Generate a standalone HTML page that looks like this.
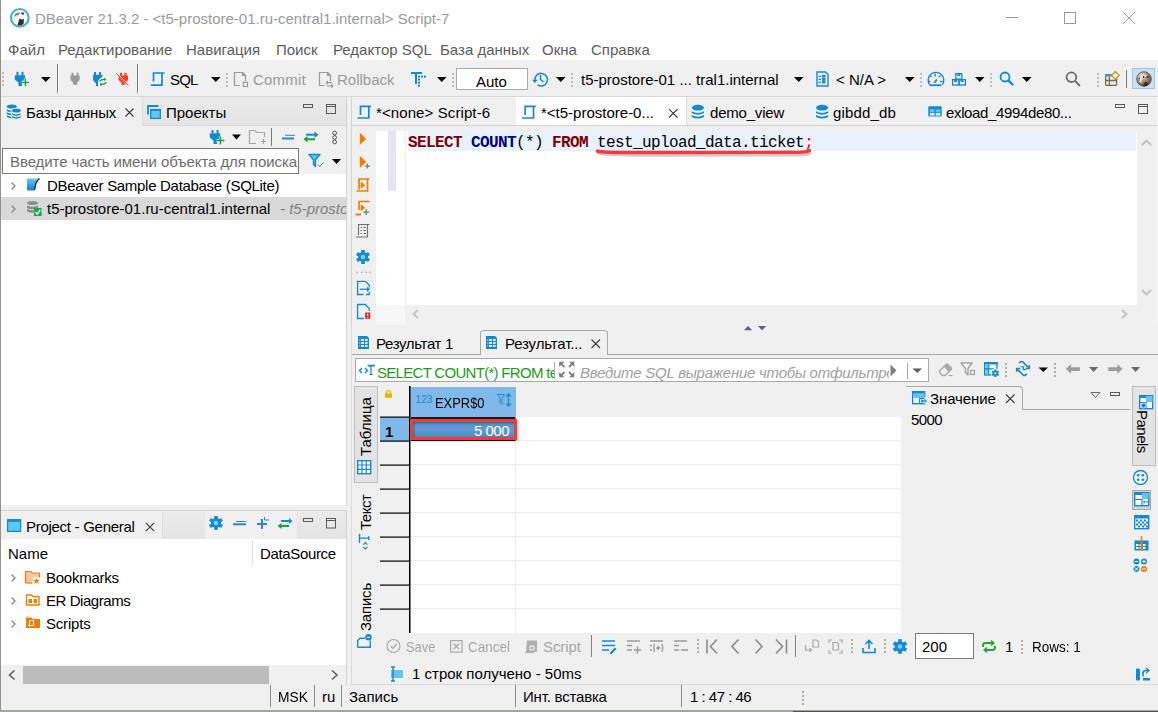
<!DOCTYPE html>
<html><head><meta charset="utf-8">
<style>
html,body{margin:0;padding:0}
body{width:1158px;height:712px;position:relative;overflow:hidden;background:#f0f0f0;font-family:"Liberation Sans",sans-serif;font-size:15px;color:#000}
.a{position:absolute}
.t{position:absolute;white-space:nowrap;line-height:17px}
.b{position:absolute;box-sizing:border-box}
svg{position:absolute;overflow:visible}
.m{font-family:"Liberation Mono",monospace}
</style></head><body>

<!-- title bar -->
<div class="b" style="left:0;top:0;width:1158px;height:60px;background:#fff"></div>
<div class="t" style="left:35px;top:10px;color:#9a9a9a">DBeaver 21.3.2 - &lt;t5-prostore-01.ru-central1.internal&gt; Script-7</div>

<!-- menu -->
<div class="t" style="left:8px;top:41px;color:#5c5c5c">Файл</div>
<div class="t" style="left:58px;top:41px;color:#5c5c5c">Редактирование</div>
<div class="t" style="left:186px;top:41px;color:#5c5c5c">Навигация</div>
<div class="t" style="left:276px;top:41px;color:#5c5c5c">Поиск</div>
<div class="t" style="left:333px;top:41px;color:#5c5c5c">Редактор SQL</div>
<div class="t" style="left:440px;top:41px;color:#5c5c5c">База данных</div>
<div class="t" style="left:542px;top:41px;color:#5c5c5c">Окна</div>
<div class="t" style="left:591px;top:41px;color:#5c5c5c">Справка</div>

<!-- toolbar -->
<div class="b" style="left:0;top:60px;width:1158px;height:36px;background:#f0f0f0"></div>


<!-- title icon + window controls -->
<svg style="left:0;top:0" width="40" height="36"><circle cx="19.8" cy="17.8" r="8.8" fill="#fff" stroke="#45b5bf" stroke-width="2.2"/><path d="M14.5,14.5 Q17,12 20,12.5 L19,15 Q16,15 14.5,17Z" fill="#8a8080"/><path d="M20.5,13 Q23,11.5 24.5,13 L23,15.5Z" fill="#5a4a48"/><path d="M17.5,25 L19.5,18.5 Q22,20 24,19 L23.5,24 Q20,26.5 17.5,25Z" fill="#3a2a28"/><path d="M13.5,16 L15,21 L14,19Z" fill="#6a5a58"/></svg>
<svg style="left:1000px;top:0" width="158" height="36" stroke="#999" stroke-width="1" fill="none"><path d="M6,17.5H18"/><rect x="64.5" y="12.5" width="11" height="11"/><path d="M123,12L135,24M135,12L123,24"/></svg>

<!-- toolbar grips & separators -->
<svg style="left:0;top:60px" width="1158" height="36">
<g fill="#c4bcae"><rect x="2" y="12" width="2" height="2"/><rect x="2" y="16" width="2" height="2"/><rect x="2" y="20" width="2" height="2"/><rect x="2" y="24" width="2" height="2"/></g>
<g fill="#c4bcae" id="grips">
<rect x="226" y="13" width="2" height="2"/><rect x="226" y="17" width="2" height="2"/><rect x="226" y="21" width="2" height="2"/><rect x="226" y="25" width="2" height="2"/>
<rect x="452" y="13" width="2" height="2"/><rect x="452" y="17" width="2" height="2"/><rect x="452" y="21" width="2" height="2"/><rect x="452" y="25" width="2" height="2"/>
<rect x="571" y="13" width="2" height="2"/><rect x="571" y="17" width="2" height="2"/><rect x="571" y="21" width="2" height="2"/><rect x="571" y="25" width="2" height="2"/>
<rect x="920" y="13" width="2" height="2"/><rect x="920" y="17" width="2" height="2"/><rect x="920" y="21" width="2" height="2"/><rect x="920" y="25" width="2" height="2"/>
<rect x="990" y="13" width="2" height="2"/><rect x="990" y="17" width="2" height="2"/><rect x="990" y="21" width="2" height="2"/><rect x="990" y="25" width="2" height="2"/>
<rect x="1097" y="13" width="2" height="2"/><rect x="1097" y="17" width="2" height="2"/><rect x="1097" y="21" width="2" height="2"/><rect x="1097" y="25" width="2" height="2"/>
</g>
<g fill="#7a7a7a"><rect x="57" y="4" width="1" height="29"/><rect x="137" y="4" width="1" height="29"/><rect x="1126" y="10" width="1" height="18"/></g>
<g fill="#fff"><rect x="58" y="4" width="1" height="29"/><rect x="138" y="4" width="1" height="29"/></g>
<g fill="#000"><path d="M41,17H50.5L45.75,22Z"/><path d="M211,17H220.5L215.75,22Z"/><path d="M437,17H446.5L441.75,22Z"/><path d="M556,17H565.5L560.75,22Z"/><path d="M794,17H803.5L798.75,22Z"/><path d="M905,17H914.5L909.75,22Z"/><path d="M975,17H984.5L979.75,22Z"/><path d="M1022,17H1031.5L1026.75,22Z"/></g>
</svg>

<!-- plug + -->
<svg style="left:14px;top:71px" width="20" height="18"><g fill="#118ad3"><rect x="2.5" y="0.8" width="2" height="4"/><rect x="7.5" y="0.8" width="2" height="4"/><path d="M0.8,4.2H11.2V8.5L8,11.8V15H4.5V11.8L0.8,8.5Z"/></g><path d="M11.4,7.8V15M7.8,11.4H15" stroke="#fff" stroke-width="3.2"/><path d="M11.4,7.8V15M7.8,11.4H15" stroke="#13a538" stroke-width="1.5"/></svg>
<!-- gray plug -->
<svg style="left:70px;top:72px" width="12" height="14"><g fill="#9a9a9a"><rect x="1.5" y="0.8" width="2" height="3.5"/><rect x="6.5" y="0.8" width="2" height="3.5"/><path d="M0.5,3.5H9.7V8L7.2,10.5V12.8H3V10.5L0.5,8Z"/></g></svg>
<!-- blue plug refresh -->
<svg style="left:88px;top:68px" width="24" height="22"><g fill="#118ad3"><rect x="6" y="4" width="2" height="3.2"/><rect x="11" y="4" width="2" height="3.2"/><path d="M5.1,6.8H14.5Q15,8.5 13.5,9.5Q11,10.5 10,13V18H8V15.5L5.1,12.2Z"/></g>
<g fill="none" stroke="#13a538" stroke-width="1.3"><path d="M11.4,13.4Q13,11.2 17.2,11.4"/><path d="M18.5,14.4Q17,16.4 12.6,16.4"/></g><path d="M16.3,9.5L18.3,11.4L16.3,13.3Z" fill="#13a538"/><path d="M13.5,14.5L11.5,16.4L13.5,18.3Z" fill="#13a538"/></svg>
<!-- red plug -->
<svg style="left:116px;top:72px" width="14" height="14"><g fill="#ff3a1a"><rect x="4" y="0.8" width="2" height="3.5"/><rect x="8.5" y="0.8" width="2" height="3.5"/><path d="M2.5,3.5H12V8L9.5,10.5V12.8H5.5V10.5L2.5,8Z"/></g><path d="M1,1.5L12,13" stroke="#f0f0f0" stroke-width="1.5"/><path d="M0.3,1.3L12.5,13.5" stroke="#ff3a1a" stroke-width="0.9"/></svg>
<!-- SQL script icon -->
<svg style="left:150px;top:71px" width="18" height="16" fill="none" stroke="#118ad3" stroke-width="1.7"><path d="M3.5,10.5V2H14.5"/><path d="M12,2V14.2H1"/></svg>
<div class="t" style="left:170px;top:71px;letter-spacing:-0.8px">SQL</div>
<div class="t" style="left:253px;top:71px;color:#9a9a9a;letter-spacing:0.2px">Commit</div>
<div class="t" style="left:337px;top:71px;color:#9a9a9a">Rollback</div>
<!-- commit -->
<svg style="left:233px;top:71px" width="18" height="18" fill="none" stroke="#9a9a9a" stroke-width="1.2"><path d="M6.5,14.5H1.5V1.5H9.8L12.5,4.2V10"/><path d="M9.5,1.5V4.5H12.5" fill="#9a9a9a"/><rect x="10.3" y="11.3" width="4.2" height="4.2"/></svg>
<!-- rollback -->
<svg style="left:318px;top:71px" width="18" height="18" fill="none" stroke="#9a9a9a" stroke-width="1.2"><path d="M6.5,14.5H1.5V1.5H9.8L12.5,4.2V10"/><path d="M9.5,1.5V4.5H12.5" fill="#9a9a9a"/><path d="M8,11.6H14M8,11.6L9.8,10M8,11.6L9.8,13.2"/><path d="M9,15H15M15,15L13.2,13.4M15,15L13.2,16.6"/></svg>
<!-- T format -->
<svg style="left:410px;top:71px" width="18" height="16" fill="#118ad3"><rect x="1" y="1" width="11" height="2"/><rect x="5" y="1" width="2" height="12"/><rect x="8" y="4.6" width="2" height="2"/><rect x="11" y="4.6" width="2" height="2"/><rect x="14" y="4.6" width="2" height="2"/><rect x="8" y="7.6" width="2" height="2"/><rect x="8" y="10.6" width="2" height="2"/><rect x="8" y="13.6" width="2" height="2"/></svg>
<!-- Auto box -->
<div class="b" style="left:456px;top:68px;width:72px;height:22px;background:#fff;border:1px solid #a9a9a9"></div>
<div class="t" style="left:476px;top:73px">Auto</div>
<!-- history -->
<svg style="left:531px;top:70px" width="20" height="18" fill="none" stroke="#118ad3" stroke-width="1.5"><path d="M4,11A6.3,6.3 0 1 1 6.5,14.8"/><path d="M9.5,5V9.5L12.5,12"/><path d="M1,9.8H6.8L3.9,13Z" fill="#118ad3" stroke="none"/></svg>
<div class="t" style="left:581px;top:71px">t5-prostore-01 ... tral1.internal</div>
<!-- doc icon -->
<svg style="left:816px;top:71px" width="14" height="16" fill="none" stroke="#118ad3" stroke-width="1.4"><path d="M1,1H9.5L12,3.5V15H1Z"/><g stroke-width="1.3"><path d="M2.5,5.3H5M2.5,8.3H5M2.5,11.3H5"/></g><g fill="#118ad3" stroke="none"><rect x="6" y="3.8" width="3.5" height="2.6"/><rect x="6" y="6.8" width="3.5" height="3"/><rect x="6" y="10" width="3.5" height="2.4"/></g></svg>
<div class="t" style="left:836px;top:71px">&lt; N/A &gt;</div>
<!-- dashboard -->
<svg style="left:922px;top:66px" width="48" height="26">
<g fill="none" stroke="#1a86d0" stroke-width="1.4"><path d="M7.5,18.5A7.8,7.8 0 1 1 20.5,18.5"/><path d="M13.2,7.5V10.5M8,9.5L9.5,11M18.5,9.5L17,11M6,15.5H8.5M18,15.5H20.5"/></g>
<path d="M7.5,19.2H19.5" stroke="#1a86d0" stroke-width="1.8"/>
<path d="M11.8,16.3L14.3,13.2L15.2,14L13,16.8Z" fill="#1a86d0" stroke="#1a86d0" stroke-width="0.8"/>
<g fill="none" stroke="#1a86d0" stroke-width="1.3"><rect x="33.8" y="7.6" width="6" height="5.6"/><rect x="30.6" y="13.6" width="6.4" height="5.4"/><rect x="37" y="13.6" width="6.4" height="5.4"/><path d="M36,7.6V9.3H37.6V7.6M32.8,13.6V15.3H34.4V13.6M39.2,13.6V15.3H40.8V13.6"/></g>
</svg>
<!-- blue search -->
<svg style="left:999px;top:71px" width="16" height="16" fill="none" stroke="#118ad3"><circle cx="6" cy="6" r="4.5" stroke-width="1.8"/><path d="M9.5,9.5L13.5,13.5" stroke-width="2.4" stroke-linecap="round"/></svg>
<!-- gray search -->
<svg style="left:1065px;top:71px" width="18" height="18" fill="none" stroke="#6e6e6e"><circle cx="6.4" cy="6.2" r="4.8" stroke-width="1.8"/><path d="M10,9.8L15,15" stroke-width="2"/></svg>
<!-- table new -->
<svg style="left:1100px;top:68px" width="24" height="22"><rect x="5.6" y="6.6" width="11" height="10.8" rx="1" fill="#e2f2fc" stroke="#7a6a40" stroke-width="1.3"/><rect x="5" y="6" width="12.2" height="2.6" rx="0.8" fill="#4a8ad0"/><path d="M9.4,8.6V17.3M5.6,12.5H16.6" stroke="#7a6a40" stroke-width="1.3"/><path d="M15.4,3.6L19.2,7.4L15.4,11.2L11.6,7.4Z" fill="#fff6d0" stroke="#c89a20" stroke-width="1.4"/><path d="M15.4,5.2V9.6M13.2,7.4H17.6" stroke="#fff" stroke-width="1"/></svg>
<!-- beaver button -->
<div class="b" style="left:1132px;top:68px;width:23px;height:21px;background:#c9e0f5;border:1px solid #90c8f4"></div>
<svg style="left:1130px;top:66px" width="28" height="26"><defs><radialGradient id="bv" cx="0.35" cy="0.3" r="0.8"><stop offset="0" stop-color="#f4ece4"/><stop offset="0.45" stop-color="#a89080"/><stop offset="1" stop-color="#5a4436"/></radialGradient></defs><circle cx="14" cy="13" r="7.3" fill="url(#bv)" stroke="#4a3a30" stroke-width="0.7"/><path d="M9.5,16Q10,11 13.5,9.5L17.5,9.3Q15,10.5 12,12.5Q11,14.5 11.5,17Z" fill="#fff" opacity="0.85"/><circle cx="13.6" cy="11" r="0.9" fill="#222"/><circle cx="17.6" cy="11" r="1" fill="#222"/><path d="M13,20Q14,15.5 16.5,16Q18.5,17 17.5,19.5Q15.5,20.8 13,20Z" fill="#3a2a22"/><path d="M8.5,12.5L9.8,11.5L9.5,13.5Z" fill="#222"/></svg>
<!-- left DB panel -->
<div class="b" style="left:1px;top:96px;width:346px;height:410px;background:#f0f0f0;border-right:1px solid #d4d4d4"></div>
<div class="b" style="left:142px;top:96px;width:204px;height:30px;background:linear-gradient(#ebebeb,#e4e4e4);border-bottom:1px solid #d8d8d8;border-left:1px solid #dcdcdc"></div>
<div class="b" style="left:1px;top:174px;width:345px;height:331px;background:#fff"></div>
<div class="b" style="left:1px;top:197px;width:345px;height:23px;background:#d9d9d9"></div>
<div class="t" style="left:26px;top:104px;letter-spacing:-0.15px">Базы данных</div>
<div class="t" style="left:166px;top:104px">Проекты</div>
<div class="b" style="left:2px;top:148px;width:297px;height:26px;background:#fff;border:1px solid #7a7a7a"></div>
<div class="t" style="left:10px;top:153px;color:#6d6d6d;letter-spacing:-0.08px">Введите часть имени объекта для поиска</div>
<div class="t" style="left:47px;top:177px;letter-spacing:-0.3px">DBeaver Sample Database (SQLite)</div>
<div class="t" style="left:47px;top:200px">t5-prostore-01.ru-central1.internal</div>
<div class="t" style="left:280px;top:200px;color:#808080;font-style:italic;width:66px;overflow:hidden">- t5-prostore</div>

<!-- project panel -->
<div class="b" style="left:1px;top:510px;width:346px;height:176px;background:#f0f0f0;border-right:1px solid #d4d4d4;border-top:1px solid #d4d4d4"></div>
<div class="b" style="left:162px;top:511px;width:184px;height:29px;background:linear-gradient(#ebebeb,#e4e4e4);border-bottom:1px solid #d8d8d8;border-left:1px solid #dcdcdc"></div>
<div class="b" style="left:205px;top:511px;width:92px;height:28px;background:#f0f0f0"></div>
<div class="b" style="left:1px;top:539px;width:345px;height:126px;background:#fff"></div>
<div class="t" style="left:26px;top:518px;letter-spacing:-0.28px">Project - General</div>
<div class="t" style="left:8px;top:545px">Name</div>
<div class="t" style="left:260px;top:545px;letter-spacing:-0.35px">DataSource</div>
<div class="t" style="left:46px;top:569px;letter-spacing:-0.25px">Bookmarks</div>
<div class="t" style="left:46px;top:592px;letter-spacing:-0.45px">ER Diagrams</div>
<div class="t" style="left:46px;top:615px;letter-spacing:-0.2px">Scripts</div>


<!-- left panel icons -->
<svg style="left:0;top:96px" width="347" height="80">
<!-- db stack -->
<g fill="#118ad3">
<ellipse cx="11.8" cy="10.5" rx="5" ry="2"/>
<path d="M6.8,13.3Q11.8,16 16.8,13.3V15Q11.8,17.7 6.8,15Z"/>
<path d="M6.8,16.3Q11.8,19 16.8,16.3V18Q11.8,20.7 6.8,18Z"/>
<path d="M6.8,19.3Q11.8,22 16.8,19.3V21Q11.8,23.7 6.8,21Z"/>
</g>
<ellipse cx="16.3" cy="15.5" rx="5.6" ry="2.6" fill="#f0f0f0"/>
<g fill="#118ad3" stroke="#f0f0f0" stroke-width="0.8">
<ellipse cx="16.3" cy="14.6" rx="4.8" ry="2.3"/>
<path d="M11.5,16.8Q16.3,19.6 21.1,16.8V19Q16.3,21.8 11.5,19Z"/>
<path d="M11.5,19.6Q16.3,22.4 21.1,19.6V21.8Q16.3,24.6 11.5,21.8Z"/>
</g>
<!-- close x -->
<path d="M125.5,12.5L133.5,20.5M133.5,12.5L125.5,20.5" stroke="#3a3a3a" stroke-width="1.1"/>
<!-- projects icon -->
<path d="M148,18.5V10H158.5" fill="none" stroke="#118ad3" stroke-width="1.8"/>
<rect x="150.7" y="13.6" width="9.6" height="8.8" fill="#60c8ee" stroke="#118ad3" stroke-width="1.3"/>
<rect x="150" y="13" width="11" height="2" fill="#118ad3"/>
<!-- min/max -->
<rect x="303.5" y="8.5" width="9" height="3" fill="none" stroke="#5a5a5a" stroke-width="1"/>
<rect x="326.5" y="8.5" width="9" height="9" fill="none" stroke="#5a5a5a" stroke-width="1"/>
<path d="M327,10.5H336" stroke="#5a5a5a" stroke-width="1"/>
<!-- toolbar row -->
<g fill="#118ad3" transform="translate(209,34)"><rect x="2.5" y="0" width="2" height="3.5"/><rect x="7.5" y="0" width="2" height="3.5"/><path d="M0.8,3.2H11.2V7.5L8,10.8V14H4.5V10.8L0.8,7.5Z"/></g>
<path d="M220.4,40.5V48.5M216.4,44.5H224.4" stroke="#f0f0f0" stroke-width="3.2"/><path d="M220.4,40.5V48.5M216.4,44.5H224.4" stroke="#13a538" stroke-width="1.5"/>
<path d="M232,38.5H241L236.5,43.5Z" fill="#000"/>
<path d="M256,47.5H249.5V34.5H255L257,36.5H264.5V41" fill="none" stroke="#a6a6a6" stroke-width="1.2"/>
<path d="M261,45.5H266M263.5,43V48" stroke="#a6a6a6" stroke-width="1.2"/>
<rect x="271" y="32" width="1" height="18" fill="#7a7a7a"/>
<path d="M282,42.5H294" stroke="#2a86d0" stroke-width="2"/><path d="M285,39.3H295" stroke="#2a86d0" stroke-width="1"/>
<path d="M306,38.7H316" stroke="#118ad3" stroke-width="2"/><path d="M314.5,35.5L318.5,38.7L314.5,42Z" fill="#118ad3"/>
<path d="M306,43.3H315" stroke="#13a538" stroke-width="2"/><path d="M307.5,40L303.5,43.3L307.5,46.5Z" fill="#13a538"/>
<g fill="none" stroke="#555" stroke-width="1"><circle cx="334.6" cy="37" r="1.9"/><circle cx="334.6" cy="41.5" r="1.9"/><circle cx="334.6" cy="46" r="1.9"/></g>
<!-- filter -->
<path d="M309,58.5H320L315.5,63.8V70.5L313.5,68.5V63.8Z" fill="#64c4ee" stroke="#118ad3" stroke-width="1.4" stroke-linejoin="round"/>
<path d="M318,68.5L319.8,70.5L323.5,66.5" fill="none" stroke="#13a538" stroke-width="1"/>
<path d="M332,63H341L336.5,68Z" fill="#000"/>
</svg>
<svg style="left:0;top:176px" width="347" height="44">
<path d="M11.5,6.5L15,10L11.5,13.5" fill="none" stroke="#8a8a8a" stroke-width="1.4"/>
<path d="M11.5,29.5L15,33L11.5,36.5" fill="none" stroke="#8a8a8a" stroke-width="1.4"/>
<defs><linearGradient id="sq" x1="0" y1="0" x2="0" y2="1"><stop offset="0" stop-color="#6ac8f4"/><stop offset="1" stop-color="#1a7ad8"/></linearGradient></defs>
<path d="M27,2.5H37L34.5,14.5H28Q27,14.5 27,13.5Z" fill="url(#sq)"/>
<path d="M39.5,2.5Q36,4 34.5,14" fill="none" stroke="#1a3a5a" stroke-width="1.6"/>
<g fill="#8c8c8c"><ellipse cx="32.5" cy="27" rx="5.5" ry="2"/><path d="M27,29.5Q32.5,32 38,29.5V32Q32.5,34.5 27,32Z"/><path d="M27,33Q32.5,35.5 38,33V35.5Q32.5,38 27,35.5Z"/></g>
<rect x="34" y="32" width="7.5" height="8" fill="#18a84a"/>
<path d="M35.5,36L37.3,38.2L40.3,33.8" fill="none" stroke="#fff" stroke-width="1.3"/>
</svg>

<!-- project panel icons -->
<svg style="left:0;top:511px" width="347" height="120">
<rect x="7.6" y="8.8" width="13" height="11.6" fill="#60c8ee" stroke="#118ad3" stroke-width="1.3"/>
<rect x="7" y="8.3" width="14" height="2.5" fill="#118ad3"/>
<path d="M145.8,11.8L154.2,20.2M154.2,11.8L145.8,20.2" stroke="#3a3a3a" stroke-width="1.1"/>
<!-- gear -->
<g transform="translate(216,12)"><circle r="5" fill="#118ad3"/><g fill="#118ad3"><rect x="-1.7" y="-7" width="3.4" height="14"/><rect x="-1.7" y="-7" width="3.4" height="14" transform="rotate(60)"/><rect x="-1.7" y="-7" width="3.4" height="14" transform="rotate(120)"/></g><circle r="2.3" fill="#7ad0f4"/></g>
<path d="M233,13.3H246" stroke="#2a86d0" stroke-width="2"/><path d="M236,10.5H246" stroke="#2a86d0" stroke-width="1"/>
<path d="M262,8V18M257,13H267" stroke="#2a86d0" stroke-width="2"/><path d="M264.5,6V9H269" fill="none" stroke="#2a86d0" stroke-width="1"/>
<path d="M281,10H290" stroke="#118ad3" stroke-width="2"/><path d="M289,7L292.5,10L289,13Z" fill="#118ad3"/>
<path d="M281,15H289" stroke="#13a538" stroke-width="2"/><path d="M281.5,12L277.5,15L281.5,18Z" fill="#13a538"/>
<rect x="303.5" y="7.5" width="9" height="3" fill="none" stroke="#5a5a5a" stroke-width="1"/>
<rect x="326.5" y="7.5" width="9" height="9.5" fill="none" stroke="#5a5a5a" stroke-width="1"/>
<path d="M327,9.5H336" stroke="#5a5a5a" stroke-width="1"/>
<!-- column divider -->
<rect x="252" y="29" width="1" height="26" fill="#e0e0e0"/>
<!-- tree rows -->
<g fill="none" stroke="#8a8a8a" stroke-width="1.4"><path d="M11.5,63.5L15,67L11.5,70.5"/><path d="M11.5,86.5L15,90L11.5,93.5"/><path d="M11.5,109.5L15,113L11.5,116.5"/></g>
<path d="M25.5,72V60.5H31L32.5,62H39.5V66.5" fill="#ffc4a0" stroke="#f57c00" stroke-width="1.2"/><path d="M25.5,72H33V66.5H39.5" fill="#ffc4a0" stroke="none"/><path d="M25.5,72H32.5" stroke="#f57c00" stroke-width="1.2"/>
<circle cx="36.5" cy="70" r="4.3" fill="#fff"/><path d="M36.5,66.5L37.5,69H40L38,70.5L38.8,73L36.5,71.5L34.2,73L35,70.5L33,69H35.5Z" fill="#f57c00"/>
<path d="M26.5,94V84H31.5L33,85.5H39V94Z" fill="none" stroke="#f57c00" stroke-width="1.4"/><rect x="28.5" y="88" width="3.5" height="4" fill="#f57c00"/><rect x="33.5" y="88" width="3.5" height="4" fill="#f57c00"/>
<path d="M26,117V106.5H31.5L33,108H40V117Z" fill="#f57c00"/><path d="M29.5,115.5V109.5H33.5V114.5H28" fill="none" stroke="#fff" stroke-width="1"/>
<!-- scrollbar -->
<rect x="1" y="154" width="345" height="20" fill="#f0f0f0"/>
<rect x="23" y="155" width="246" height="18" fill="#bcbcbc"/>
<path d="M14.5,159.5L9.5,164L14.5,168.5M332,159.5L337,164L332,168.5" fill="none" stroke="#606060" stroke-width="1.6"/>
</svg>

<!-- editor panel -->
<div class="b" style="left:351px;top:96px;width:807px;height:230px;background:#f0f0f0;border-left:1px solid #d4d4d4"></div>
<div class="b" style="left:516px;top:97px;width:170px;height:28px;background:#fff"></div>
<div class="b" style="left:352px;top:125px;width:806px;height:1px;background:#d4d4d4"></div>
<div class="b" style="left:376px;top:131px;width:761px;height:174px;background:#fff"></div>
<div class="b" style="left:408px;top:131px;width:728px;height:20px;background:#e8f2fe"></div>
<div class="t" style="left:376px;top:104px;letter-spacing:0.1px">*&lt;none&gt; Script-6</div>
<div class="t" style="left:541px;top:104px">*&lt;t5-prostore-0...</div>
<div class="t" style="left:710px;top:104px;letter-spacing:-0.2px">demo_view</div>
<div class="t" style="left:833px;top:104px;letter-spacing:0.15px">gibdd_db</div>
<div class="t" style="left:946px;top:104px;letter-spacing:-0.35px">exload_4994de80...</div>
<div class="t m" style="left:408px;top:134px;font-size:16px;letter-spacing:-0.6px;line-height:18px"><b style="color:#7f0000">SELECT</b> <b style="color:#000080">COUNT</b>(*) <b style="color:#7f0000">FROM</b> test_upload_data.ticket<span style="color:#e00">;</span></div>


<!-- editor icons -->
<svg style="left:351px;top:96px" width="807" height="235">
<!-- tab borders -->
<rect x="335" y="1" width="1" height="28" fill="#dcdcdc"/>
<!-- script icons in tabs -->
<g fill="none" stroke="#118ad3" stroke-width="1.7"><path d="M9.5,19V10.3H20"/><path d="M17.8,10.3V22H6.5"/></g>
<g fill="none" stroke="#118ad3" stroke-width="1.7" transform="translate(164.7,0)"><path d="M9.5,19V10.3H20"/><path d="M17.8,10.3V22H6.5"/></g>
<path d="M318,13.2L326.5,21.5M326.5,13.2L318,21.5" stroke="#3a3a3a" stroke-width="1.1"/>
<!-- db icons -->
<g id="dbi" fill="#118ad3"><ellipse cx="346.9" cy="11.7" rx="6.1" ry="2.9"/><path d="M340.8,15.2Q346.9,18.6 353,15.2V17Q346.9,20.4 340.8,17Z"/><path d="M340.8,19.1Q346.9,22.5 353,19.1V20.9Q346.9,24.3 340.8,20.9Z"/></g>
<g fill="#118ad3" transform="translate(124.2,0)"><ellipse cx="346.9" cy="11.7" rx="6.1" ry="2.9"/><path d="M340.8,15.2Q346.9,18.6 353,15.2V17Q346.9,20.4 340.8,17Z"/><path d="M340.8,19.1Q346.9,22.5 353,19.1V20.9Q346.9,24.3 340.8,20.9Z"/></g>
<!-- table icon -->
<rect x="577.3" y="10.3" width="13.4" height="10.2" rx="1" fill="#118ad3"/>
<rect x="579" y="13.3" width="4.6" height="3" fill="#64c4ee"/><rect x="584.8" y="13.3" width="4.4" height="3" fill="#64c4ee"/>
<rect x="579" y="17.2" width="4.6" height="2.3" fill="#fff"/><rect x="584.8" y="17.2" width="4.4" height="2.3" fill="#fff"/>
<!-- min/max -->
<rect x="764.5" y="8.5" width="9" height="3" fill="none" stroke="#5a5a5a" stroke-width="1"/>
<rect x="787.5" y="8.5" width="9" height="9" fill="none" stroke="#5a5a5a" stroke-width="1"/>
<path d="M788,10.5H797" stroke="#5a5a5a" stroke-width="1"/>
<!-- gutter icons -->
<path d="M8.8,36.8L15.2,43L8.8,49Z" fill="#f57c00"/>
<path d="M8.8,59.8L15.2,66L8.8,72Z" fill="#f57c00"/>
<path d="M16.4,67.6V72.6M13.9,70.1H18.9" stroke="#3aa53a" stroke-width="1.3"/>
<g fill="none" stroke="#f57c00" stroke-width="1.7"><path d="M8,93.5V83H18.5"/><path d="M16.5,83V95H5.5"/></g><path d="M9.8,85.5L14.3,89.2L9.8,92.8Z" fill="#f57c00"/>
<g fill="none" stroke="#f57c00" stroke-width="1.7"><path d="M8,114V105.5H18.5"/></g><path d="M4.5,117.5H10V119.5H4.5Z" fill="#f57c00"/><path d="M9.8,108L14.3,111.7L9.8,115.3Z" fill="#f57c00"/>
<path d="M15.2,113.2V119M12.3,116.1H18.1" stroke="#3aa53a" stroke-width="1.3"/>
<g fill="none" stroke="#707070" stroke-width="1.1"><path d="M7.5,139V128.5H18.5"/><path d="M16.5,128.5V141H5"/><path d="M9.5,131.5H11M12.5,131.5H15M9.5,134.5H11M12.5,134.5H15M9.5,137.5H11M12.5,137.5H15"/></g>
<g transform="translate(12,161)"><circle r="5" fill="#118ad3"/><g fill="#118ad3"><rect x="-1.8" y="-7" width="3.6" height="14"/><rect x="-1.8" y="-7" width="3.6" height="14" transform="rotate(60)"/><rect x="-1.8" y="-7" width="3.6" height="14" transform="rotate(120)"/></g><circle r="2.3" fill="#7ad0f4"/></g>
<g fill="#b4ac9c"><rect x="5.5" y="175.5" width="1.5" height="1.5"/><rect x="10" y="175.5" width="1.5" height="1.5"/><rect x="14.5" y="175.5" width="1.5" height="1.5"/><rect x="18.5" y="175.5" width="1.5" height="1.5"/></g>
<path d="M12.5,198.5H6.6V185.3H14.3L18.3,189.3V191.5M18.3,195.5V198.5H15" fill="none" stroke="#118ad3" stroke-width="1.3"/><path d="M9,193.3H17" stroke="#118ad3" stroke-width="1.3"/><path d="M16,190.5L19,193.3L16,196Z" fill="#118ad3"/>
<path d="M13,222.5H6.6V208.5H14.3L18.3,212.5V215" fill="none" stroke="#118ad3" stroke-width="1.3"/><rect x="14.2" y="216.5" width="5" height="6.3" fill="#ee1c1c"/><rect x="16.1" y="217.5" width="1.2" height="2.6" fill="#fff"/><rect x="16.1" y="221" width="1.2" height="1" fill="#fff"/>
<!-- ruler and lines -->
<rect x="37" y="35" width="8" height="60" fill="#e4e4f0"/>
<rect x="54" y="35" width="1" height="174" fill="#f0f0f0"/>
<!-- red underline -->
<path d="M247,57Q252,59.5 300,59.3L440,59Q456,59.5 459,57.5" fill="none" stroke="#555" stroke-width="3" opacity="0.3" stroke-linecap="round"/>
<path d="M246.5,55Q249,56.8 300,56.5L440,56.3Q455,56.8 458.5,54.5" fill="none" stroke="#f23c3c" stroke-width="3.4" stroke-linecap="round"/>
<!-- scrollbar area -->
<rect x="25" y="209" width="29" height="20" fill="#f7f7f7"/>
<path d="M67,214L62.5,218L67,222" fill="none" stroke="#c0c0c0" stroke-width="1.8"/>
<path d="M771,214L775.5,218L771,222" fill="none" stroke="#c0c0c0" stroke-width="1.8"/>
<path d="M791,49L795.5,44.5L800,49" fill="none" stroke="#c0c0c0" stroke-width="1.8"/>
<path d="M791,194L795.5,198.5L800,194" fill="none" stroke="#c0c0c0" stroke-width="1.8"/>
<rect x="806" y="0" width="1" height="229" fill="#fafafa"/>
<!-- sash arrows -->

</svg>

<!-- results -->
<div class="b" style="left:351px;top:326px;width:807px;height:360px;background:#f0f0f0;border-left:1px solid #dcdcdc"></div>
<div class="b" style="left:352px;top:354px;width:806px;height:1px;background:#a8a8a8"></div>
<div class="b" style="left:480px;top:330px;width:128px;height:25px;background:#f0f0f0;border:1px solid #a8a8a8;border-bottom:none;border-radius:4px 4px 0 0"></div>
<div class="t" style="left:376px;top:335px;letter-spacing:-0.35px">Результат 1</div>
<div class="t" style="left:505px;top:335px;letter-spacing:-0.15px">Результат...</div>
<div class="b" style="left:355px;top:358px;width:574px;height:24px;background:#fff;border:1px solid #a9a9a9"></div>
<div class="t" style="left:377px;top:364px;color:#1e9a1e;width:177px;overflow:hidden;letter-spacing:-0.7px">SELECT COUNT(*) FROM test_upload_data.ticket</div>
<div class="t" style="left:580px;top:364px;color:#a0a0a0;font-style:italic;width:309px;overflow:hidden;letter-spacing:-0.25px">Введите SQL выражение чтобы отфильтровать результаты</div>
<!-- grid -->
<div class="b" style="left:354px;top:386px;width:24px;height:97px;background:#e3e3e3;border:1px solid #bdbdbd"></div>
<div class="b" style="left:410px;top:417px;width:491px;height:216px;background:#fff"></div>
<div class="b" style="left:410px;top:387px;width:106px;height:30px;background:#80b9e9"></div>
<div class="b" style="left:380px;top:417px;width:30px;height:24px;background:#80b9e9"></div>
<div class="b" style="left:906px;top:386px;width:117px;height:24px;background:#f0f0f0;border-top:1px solid #a8a8a8;border-right:1px solid #a8a8a8;border-radius:0 4px 0 0"></div>
<div class="b" style="left:1132px;top:386px;width:24px;height:80px;background:#e3e3e3;border:1px solid #bdbdbd"></div>
<div class="b" style="left:1132px;top:490px;width:19px;height:20px;background:#d4d4d4;border:1px solid #a8a8a8"></div>
<svg style="left:351px;top:326px" width="807" height="360">
<!-- tab icons -->
<g transform="translate(7,10)"><path d="M0,0H9L11,2V13H0Z" fill="#118ad3"/><g fill="#fff"><rect x="3" y="3" width="3" height="1.8"/><rect x="7" y="3" width="2.6" height="1.8"/><rect x="3" y="6" width="3" height="1.8"/><rect x="7" y="6" width="2.6" height="1.8"/><rect x="3" y="9" width="3" height="1.8"/><rect x="7" y="9" width="2.6" height="1.8"/></g><g fill="#64c4ee"><rect x="1" y="3" width="1.3" height="1.8"/><rect x="1" y="6" width="1.3" height="1.8"/><rect x="1" y="9" width="1.3" height="1.8"/></g></g>
<g transform="translate(135,10)"><path d="M0,0H9L11,2V13H0Z" fill="#118ad3"/><g fill="#fff"><rect x="3" y="3" width="3" height="1.8"/><rect x="7" y="3" width="2.6" height="1.8"/><rect x="3" y="6" width="3" height="1.8"/><rect x="7" y="6" width="2.6" height="1.8"/><rect x="3" y="9" width="3" height="1.8"/><rect x="7" y="9" width="2.6" height="1.8"/></g><g fill="#64c4ee"><rect x="1" y="3" width="1.3" height="1.8"/><rect x="1" y="6" width="1.3" height="1.8"/><rect x="1" y="9" width="1.3" height="1.8"/></g></g>
<path d="M240.5,13.5L249,22M249,13.5L240.5,22" stroke="#3a3a3a" stroke-width="1.1"/>
<!-- filter row icons -->
<g fill="none" stroke="#118ad3" stroke-width="1.4"><path d="M11,42L8.5,44.5L11,47M14,42L16.5,44.5L14,47"/><path d="M17.5,40H23M20,40V48.5M18.5,48.5H22" stroke-width="1.2"/><path d="M16.5,39.5H24" stroke-width="1.5"/></g>
<rect x="203" y="36" width="1" height="17" fill="#a9a9a9"/>
<g fill="none" stroke="#808080" stroke-width="1.8"><path d="M209,36.5L213.5,41M222.5,36.5L218,41M209,50.5L213.5,46M222.5,50.5L218,46"/></g><g fill="#808080"><path d="M208.2,35.8H213.5L208.2,41Z"/><path d="M223.3,35.8H218L223.3,41Z"/><path d="M208.2,51.2H213.5L208.2,46Z"/><path d="M223.3,51.2H218L223.3,46Z"/></g>
<path d="M539.5,38.5L545.5,44.5L539.5,50.5Z" fill="#808080"/>
<rect x="556" y="37" width="1" height="16" fill="#a9a9a9"/>
<path d="M561.5,42.5H571L566.25,47Z" fill="#606060"/>
<!-- eraser -->
<g transform="translate(587,36)"><path d="M2,8.5L8,2.5Q9,1.5 10,2.5L13,5.5Q14,6.5 13,7.5L7,13.5H4.5L2,11Q1,9.5 2,8.5Z" fill="none" stroke="#a8a8a8" stroke-width="1.4"/><path d="M9,2L14,7L11,10L6,5Z" fill="#a8a8a8"/><path d="M10.5,13.5H14.5" stroke="#a8a8a8" stroke-width="1.2"/></g>
<!-- filter gray -->
<g transform="translate(609,36)"><path d="M1,1H12L8,6.5V13L5.5,10.5V6.5Z" fill="none" stroke="#a0a0a0" stroke-width="1.3" stroke-linejoin="round"/><rect x="10.5" y="8.5" width="4" height="4" fill="none" stroke="#a0a0a0" stroke-width="1.2"/></g>
<!-- table gear -->
<g transform="translate(633,36)"><rect x="0.7" y="0.7" width="12.2" height="12.2" fill="#fff" stroke="#118ad3" stroke-width="1.4"/><rect x="0" y="0" width="13.6" height="2.5" fill="#118ad3"/><rect x="1.4" y="2.5" width="3.2" height="10" fill="#64c4ee"/><path d="M4.8,2.5V13M1,6.8H4.8M4.8,6.8H10" stroke="#118ad3" stroke-width="1.2"/><g transform="translate(11.4,11.2)"><circle r="4.6" fill="#f0f0f0"/><circle r="2.6" fill="#118ad3"/><g fill="#118ad3"><rect x="-1" y="-3.8" width="2" height="7.6"/><rect x="-1" y="-3.8" width="2" height="7.6" transform="rotate(60)"/><rect x="-1" y="-3.8" width="2" height="7.6" transform="rotate(120)"/></g><circle r="1" fill="#fff"/></g></g>
<g fill="#b4ac9c"><rect x="654" y="37" width="2" height="2"/><rect x="654" y="41" width="2" height="2"/><rect x="654" y="45" width="2" height="2"/><rect x="654" y="49" width="2" height="2"/></g>
<!-- refresh -->
<g transform="translate(672,42.5) rotate(45)" fill="none" stroke="#118ad3" stroke-width="1.5"><path d="M-6.5,-1V-2.5Q-6.5,-4.5 -4.5,-4.5H4"/><path d="M6.5,1V2.5Q6.5,4.5 4.5,4.5H-4"/><path d="M2,-7L4.5,-4.5L2,-2M-2,7L-4.5,4.5L-2,2"/><path d="M-3,0.5L-1,-1.5L1,0.5L3,-1.5" stroke-width="1.2"/></g>
<path d="M687.5,41.5H697L692.25,46Z" fill="#000"/>
<g fill="#b4ac9c"><rect x="703" y="37" width="2" height="2"/><rect x="703" y="41" width="2" height="2"/><rect x="703" y="45" width="2" height="2"/><rect x="703" y="49" width="2" height="2"/></g>
<!-- arrows -->
<path d="M714.9,43L720,37.9V41.2H728.9V44.9H720V47.8Z" fill="#9c9c9c"/>
<path d="M738,41H747.2L742.6,46Z" fill="#6a6a70"/>
<path d="M771.4,43L766.4,37.9V41.2H757.2V44.9H766.4V47.8Z" fill="#9c9c9c"/>
<path d="M780,41H789.2L784.6,46Z" fill="#6a6a70"/>
<!-- value tab / panel -->
<g transform="translate(561,65)"><rect x="0.7" y="0.7" width="12" height="12" fill="#fff" stroke="#118ad3" stroke-width="1.4"/><rect x="1" y="1" width="11.5" height="6" fill="#64c4ee"/><path d="M1,1.3H12.5" stroke="#118ad3" stroke-width="2"/><path d="M7.5,12.5V7.5H13.5" fill="none" stroke="#118ad3" stroke-width="1.2"/><path d="M9.5,10H13.5M9.5,8.5V11.5M13.5,8.5V11.5" stroke="#118ad3" stroke-width="1"/><rect x="12.5" y="6" width="2" height="7" fill="#f0f0f0"/><path d="M10,10H14M10,8.5V11.5M14,8.5V11.5" stroke="#118ad3" stroke-width="1"/></g>
<path d="M655,68.5L663.5,77M663.5,68.5L655,77" stroke="#3a3a3a" stroke-width="1.1"/>
<path d="M672,83.5H779" stroke="#a8a8a8" stroke-width="1"/>
<path d="M740,66.5H749L744.5,71.5Z" fill="none" stroke="#6a6a6a" stroke-width="1"/>
<rect x="759.5" y="66.5" width="9" height="3" fill="none" stroke="#5a5a5a" stroke-width="1"/>
<!-- panels strip -->
<g transform="translate(788,69)"><rect x="0.7" y="0.7" width="13" height="13" fill="#fff" stroke="#118ad3" stroke-width="1.4"/><rect x="7" y="1" width="6.5" height="6" fill="#64c4ee"/><rect x="1" y="1" width="6" height="2" fill="#118ad3"/><path d="M1,7.5H7V13" fill="none" stroke="#118ad3" stroke-width="1.2"/><circle cx="4.5" cy="10.5" r="2.5" fill="#118ad3" stroke="#e3e3e3" stroke-width="0.8"/></g>
<g transform="translate(789.5,151.5)"><circle cx="0" cy="0" r="7" fill="none" stroke="#118ad3" stroke-width="1.4"/><circle cx="-2.3" cy="-2.3" r="1.3" fill="#118ad3"/><circle cx="2.3" cy="-2.3" r="1.3" fill="#118ad3"/><circle cx="-2.3" cy="2.3" r="1.3" fill="#118ad3"/><circle cx="2.3" cy="2.3" r="1.3" fill="#118ad3"/></g>
<g transform="translate(783,166)"><rect x="0.7" y="0.7" width="14" height="13" fill="#fff" stroke="#118ad3" stroke-width="1.4"/><rect x="8" y="1" width="6.5" height="6" fill="#64c4ee"/><rect x="1" y="1" width="7" height="2" fill="#118ad3"/><path d="M1,7.5H8V13.5" fill="none" stroke="#118ad3" stroke-width="1.2"/><path d="M10,10H14.5M10,8.5V11.5M14.5,8.5V11.5" stroke="#118ad3" stroke-width="1"/></g>
<g transform="translate(783,189)"><rect x="0.7" y="0.7" width="14" height="13" fill="#fff" stroke="#118ad3" stroke-width="1.4"/><rect x="1" y="1" width="13.5" height="2.5" fill="#118ad3"/><g fill="#118ad3"><rect x="2" y="4.5" width="2" height="2"/><rect x="6" y="4.5" width="2" height="2"/><rect x="10" y="4.5" width="2" height="2"/><rect x="4" y="6.5" width="2" height="2"/><rect x="8" y="6.5" width="2" height="2"/><rect x="12" y="6.5" width="2" height="2"/><rect x="2" y="8.5" width="2" height="2"/><rect x="6" y="8.5" width="2" height="2"/><rect x="10" y="8.5" width="2" height="2"/><rect x="4" y="10.5" width="2" height="2"/><rect x="8" y="10.5" width="2" height="2"/><rect x="12" y="10.5" width="2" height="2"/></g></g>
<g transform="translate(783,210)"><path d="M7.5,0V6" stroke="#f57c00" stroke-width="1.4"/><rect x="0.5" y="4.5" width="14" height="10" fill="#118ad3"/><g fill="#fff"><rect x="2" y="8" width="2.5" height="2"/><rect x="5.5" y="8" width="2.5" height="2"/><rect x="9" y="8" width="2.5" height="2"/><rect x="2" y="11" width="2.5" height="2"/><rect x="5.5" y="11" width="2.5" height="2"/><rect x="9" y="11" width="2.5" height="2"/></g><rect x="6.5" y="4.5" width="2" height="10" fill="#f57c00"/></g>
<g transform="translate(782,232)"><circle cx="3.5" cy="3.5" r="3" fill="#118ad3"/><circle cx="11" cy="3.5" r="3" fill="#118ad3"/><circle cx="3.5" cy="11" r="3" fill="#118ad3"/><circle cx="11" cy="11" r="3" fill="#f57c00"/><path d="M1.8,3.5H5.2M9.3,3.5H12.7M11,1.8V5.2M1.8,9.3L5.2,12.7M5.2,9.3L1.8,12.7M9.3,11H12.7" stroke="#fff" stroke-width="1"/></g>
<!-- lock, header -->
<g transform="translate(34,64)"><path d="M1.5,3.5V2.5Q1.5,0.5 3.5,0.5Q5.5,0.5 5.5,2.5V3.5" fill="none" stroke="#f0b400" stroke-width="1.2"/><rect x="0" y="3.3" width="7" height="4.5" fill="#f0b400"/></g>
<path d="M34,61V63" stroke="none"/>
<!-- vertical tab icons -->
<g transform="translate(6,134)"><rect x="0.7" y="0.7" width="13" height="13" fill="#fff" stroke="#118ad3" stroke-width="1.4"/><path d="M0.7,5H13.7M0.7,9.3H13.7M5,0.7V13.7M9.3,0.7V13.7" stroke="#118ad3" stroke-width="1.2"/></g>
<g fill="none" stroke="#118ad3" stroke-width="1.4"><path d="M8.5,207.8V216.9M8.5,212.1H17.7M17.7,210.2V214"/><path d="M12.4,218.6L14.4,216.6L16.4,218.6M12.4,221L14.4,223L16.4,221" stroke-width="1.2"/></g>
<path d="M6.7,321.3V314.5L9,312.3H14M19.3,314.5V321.3H6.7" fill="none" stroke="#118ad3" stroke-width="1.4"/><circle cx="17.5" cy="311.3" r="3.2" fill="#118ad3"/><path d="M16,311.3H19" stroke="#fff" stroke-width="1"/>
<!-- bottom toolbar -->
<g transform="translate(35,313)" fill="none" stroke="#a8a8a8" stroke-width="1.2"><circle cx="7.5" cy="7" r="6.5"/><path d="M4.5,7.2L6.8,9.5L10.8,5"/></g>
<g transform="translate(99,314)" fill="none" stroke="#a8a8a8" stroke-width="1.2"><rect x="0.6" y="0.6" width="11.5" height="11.5"/><path d="M3.5,3.5L9.2,9.2M9.2,3.5L3.5,9.2"/></g>
<g transform="translate(173,313)"><path d="M3,1.5H13V13H2Z" fill="#b0b0b0"/><circle cx="8" cy="9" r="2.8" fill="#f0f0f0"/><circle cx="8" cy="9" r="1.6" fill="#b0b0b0"/><path d="M1,13.5H10" stroke="#b0b0b0" stroke-width="1.2"/></g>
<rect x="240" y="309" width="1" height="22" fill="#808080"/>
<g transform="translate(250,313)"><path d="M1,2H14M1,6.5H14M1,11H8" stroke="#118ad3" stroke-width="1.6"/><path d="M9,13.5L14,8.5L15.5,10L10.5,15H9Z" fill="#118ad3"/></g>
<g transform="translate(275,313)" stroke="#999" stroke-width="1.5"><path d="M1,2H14M1,6.5H6M1,11H6M8,11H15M11.5,7.5V14.5"/></g>
<g transform="translate(298,313)" stroke="#999" stroke-width="1.3" fill="none"><path d="M1,2H14M1,6.5H3M1,11H3"/><path d="M5.5,5Q4,9 5.5,13M13,5Q14.5,9 13,13M7,9H11.5M9.25,6.8V11.2"/></g>
<g transform="translate(322,313)" stroke="#999" stroke-width="1.5"><path d="M1,2H14M1,6.5H6M1,11H6M8,11H15"/></g>
<g fill="#b4ac9c"><rect x="346" y="313" width="2" height="2"/><rect x="346" y="317" width="2" height="2"/><rect x="346" y="321" width="2" height="2"/><rect x="346" y="325" width="2" height="2"/></g>
<g fill="none" stroke="#8a8a8a" stroke-width="1.6"><path d="M356,313.5V327.5M366,313.5L359.5,320.5L366,327.5"/><path d="M387.5,313.5L381,320.5L387.5,327.5"/><path d="M404.5,313.5L411,320.5L404.5,327.5"/><path d="M425,313.5L431.5,320.5L425,327.5M435.5,313.5V327.5"/></g>
<rect x="444" y="309" width="1" height="22" fill="#808080"/>
<g transform="translate(453,313)" fill="none" stroke="#a8a8a8" stroke-width="1.2"><path d="M1.5,6V11H7M5.5,9L7.5,11L5.5,13"/><path d="M9,8V1H12.5L14.5,3V8Z"/></g>
<g transform="translate(477,313)" fill="none" stroke="#a8a8a8" stroke-width="1.2"><path d="M1,4V1H4M11,1H14V4M14,11V14H11M4,14H1V11"/><path d="M5,11V3.5H9L10.5,5V11Z"/></g>
<g fill="#b4ac9c"><rect x="500" y="313" width="2" height="2"/><rect x="500" y="317" width="2" height="2"/><rect x="500" y="321" width="2" height="2"/><rect x="500" y="325" width="2" height="2"/></g>
<g transform="translate(511,313)" fill="none" stroke="#118ad3" stroke-width="1.6"><path d="M7,1.5V10M3.5,5L7,1.5L10.5,5"/><path d="M1,9V13.5H13V9"/></g>
<g fill="#b4ac9c"><rect x="533" y="313" width="2" height="2"/><rect x="533" y="317" width="2" height="2"/><rect x="533" y="321" width="2" height="2"/><rect x="533" y="325" width="2" height="2"/></g>
<g transform="translate(549,320.5)"><circle r="5.2" fill="#118ad3"/><g fill="#118ad3"><rect x="-1.8" y="-7.3" width="3.6" height="14.6"/><rect x="-1.8" y="-7.3" width="3.6" height="14.6" transform="rotate(60)"/><rect x="-1.8" y="-7.3" width="3.6" height="14.6" transform="rotate(120)"/></g><circle r="2.3" fill="#7ad0f4"/></g>
<g transform="translate(630,314)" fill="none" stroke="#22a83a" stroke-width="1.9"><path d="M2,7V5.5Q2,3 4.5,3H12"/><path d="M14,6V7.5Q14,10 11.5,10H4"/><path d="M10,0.5L12.8,3L10,5.5M6,7.5L3.2,10L6,12.5" stroke-width="1.6"/></g>
<g fill="#b4ac9c"><rect x="670" y="314" width="2" height="2"/><rect x="670" y="318" width="2" height="2"/><rect x="670" y="322" width="2" height="2"/><rect x="670" y="326" width="2" height="2"/></g>
<g transform="translate(38,341)"><rect x="2" y="3" width="12" height="8" fill="#64c4ee"/><path d="M4,0V14M2,0H6M2,14H6" stroke="#118ad3" stroke-width="1.4"/></g>
<g transform="translate(784,341)"><rect x="1" y="1.5" width="4" height="12" rx="1" fill="#118ad3"/><path d="M8,9.5V6Q8,3.5 11,3.5H13" fill="none" stroke="#118ad3" stroke-width="1.6"/><path d="M11,1L14,3.5L11,6" fill="none" stroke="#118ad3" stroke-width="1.4"/><rect x="8" y="11" width="7" height="2.5" fill="#118ad3"/></g>
</svg>
<!-- grid lines -->
<svg style="left:377px;top:386px" width="530" height="250">
<rect x="32" y="0" width="1.5" height="247" fill="#000"/>
<g fill="#000"><rect x="3" y="30.5" width="30" height="1.2"/><rect x="3" y="54.5" width="30" height="1.2"/><rect x="3" y="78.5" width="30" height="1.2"/><rect x="3" y="102.5" width="30" height="1.2"/><rect x="3" y="126.5" width="30" height="1.2"/><rect x="3" y="150.5" width="30" height="1.2"/><rect x="3" y="174.5" width="30" height="1.2"/><rect x="3" y="198.5" width="30" height="1.2"/><rect x="3" y="222.5" width="30" height="1.2"/></g>
<g fill="#ececec"><rect x="34" y="78" width="490" height="1"/><rect x="34" y="102" width="490" height="1"/><rect x="34" y="126" width="490" height="1"/><rect x="34" y="150" width="490" height="1"/><rect x="34" y="174" width="490" height="1"/><rect x="34" y="198" width="490" height="1"/><rect x="34" y="222" width="490" height="1"/><rect x="138" y="55" width="1" height="192"/><rect x="139" y="54" width="385" height="1"/></g>
<!-- selected cell -->
<defs><linearGradient id="selg" x1="0" y1="0" x2="0" y2="1"><stop offset="0" stop-color="#4d86be"/><stop offset="0.5" stop-color="#5f9bd6"/><stop offset="1" stop-color="#4d86be"/></linearGradient></defs>
<rect x="33.5" y="31" width="105" height="24" fill="#1a1a1a"/>
<rect x="35" y="33" width="103" height="20" fill="url(#selg)"/>
<rect x="34.5" y="34.5" width="104" height="18" fill="none" stroke="#f23c3c" stroke-width="3" filter="drop-shadow(1px 1.5px 1px rgba(0,0,0,0.35))"/>
<!-- header icons -->
<text x="38.5" y="16.5" font-size="10.2" fill="#1a8ad4" font-family="Liberation Sans">123</text>
<g transform="translate(120,8)"><path d="M0.5,0.5H7.5L5,4V10.5L3,8.5V4Z" fill="none" stroke="#1a8ad4" stroke-width="1"/><path d="M11.5,0V12M9,2.5L11.5,0L14,2.5M9,9.5L11.5,12L14,9.5" fill="none" stroke="#1a8ad4" stroke-width="1.3"/></g>
</svg>
<div class="t" style="left:435px;top:394px;transform:scaleX(0.86);transform-origin:0 0">EXPR$0</div>
<div class="t" style="left:474px;top:422px;color:#fff;letter-spacing:-0.5px">5 000</div>
<div class="t" style="left:385px;top:423px;font-weight:bold">1</div>
<div class="t" style="left:911px;top:411px;letter-spacing:-0.6px">5000</div>
<div class="t" style="left:930px;top:390px;letter-spacing:-0.1px">Значение</div>
<div class="t" style="left:357px;top:456px;transform:rotate(-90deg);transform-origin:0 0;letter-spacing:0px">Таблица</div>
<div class="t" style="left:357px;top:530px;transform:rotate(-90deg);transform-origin:0 0;letter-spacing:-0.5px">Текст</div>
<div class="t" style="left:357px;top:631px;transform:rotate(-90deg);transform-origin:0 0;letter-spacing:-0.2px">Запись</div>
<div class="t" style="left:1151px;top:410px;transform:rotate(90deg);transform-origin:0 0;letter-spacing:-0.5px">Panels</div>
<div class="t" style="left:406px;top:638px;color:#a6a6a6;transform:scaleX(0.86);transform-origin:0 0">Save</div>
<div class="t" style="left:468px;top:638px;color:#a6a6a6;transform:scaleX(0.9);transform-origin:0 0">Cancel</div>
<div class="t" style="left:543px;top:638px;color:#a6a6a6;letter-spacing:-0.1px">Script</div>
<div class="t" style="left:412px;top:665px">1 строк получено - 50ms</div>
<div class="b" style="left:915px;top:633px;width:59px;height:26px;background:#fff;border:1px solid #7a7a7a"></div>
<div class="t" style="left:922px;top:638px">200</div>
<div class="t" style="left:1005px;top:638px">1</div>
<div class="t" style="left:1032px;top:638px;transform:scaleX(0.9);transform-origin:0 0">Rows: 1</div>
<div class="b" style="left:352px;top:684px;width:806px;height:1px;background:#dadada"></div>

<svg style="left:740px;top:322px" width="30" height="12"><path d="M3.9,8.2H12.2L8.05,3.9Z M17.9,3.9H26.2L22.05,8.2Z" fill="#5a5aa0"/></svg>
<!-- status bar -->
<svg style="left:0;top:680px" width="1158" height="32"><g fill="#8a8a8a"><rect x="270" y="5" width="1" height="22"/><rect x="314" y="5" width="1" height="22"/><rect x="341" y="5" width="1" height="22"/><rect x="515" y="5" width="1" height="22"/><rect x="681" y="5" width="1" height="22"/></g><g fill="#b4ac9c"><rect x="802" y="11" width="2" height="2"/><rect x="802" y="15" width="2" height="2"/><rect x="802" y="19" width="2" height="2"/><rect x="802" y="23" width="2" height="2"/></g></svg>

<div class="t" style="left:278px;top:688px;transform:scaleX(0.92);transform-origin:0 0">MSK</div>
<div class="t" style="left:322px;top:688px">ru</div>
<div class="t" style="left:349px;top:688px">Запись</div>
<div class="t" style="left:523px;top:688px;letter-spacing:-0.2px">Инт. вставка</div>
<div class="t" style="left:690px;top:688px;letter-spacing:-0.5px">1 : 47 : 46</div>

<div class="b" style="left:1px;top:96px;width:1157px;height:1px;background:#d8d8d8"></div>
<!-- window border -->
<div class="b" style="left:0;top:0;width:1px;height:712px;background:#8e948c"></div>
<div class="b" style="left:0;top:710px;width:1158px;height:2px;background:#a0a8a0"></div>
<div class="b" style="left:793px;top:711px;width:365px;height:1px;background:#505050"></div>
</body></html>
